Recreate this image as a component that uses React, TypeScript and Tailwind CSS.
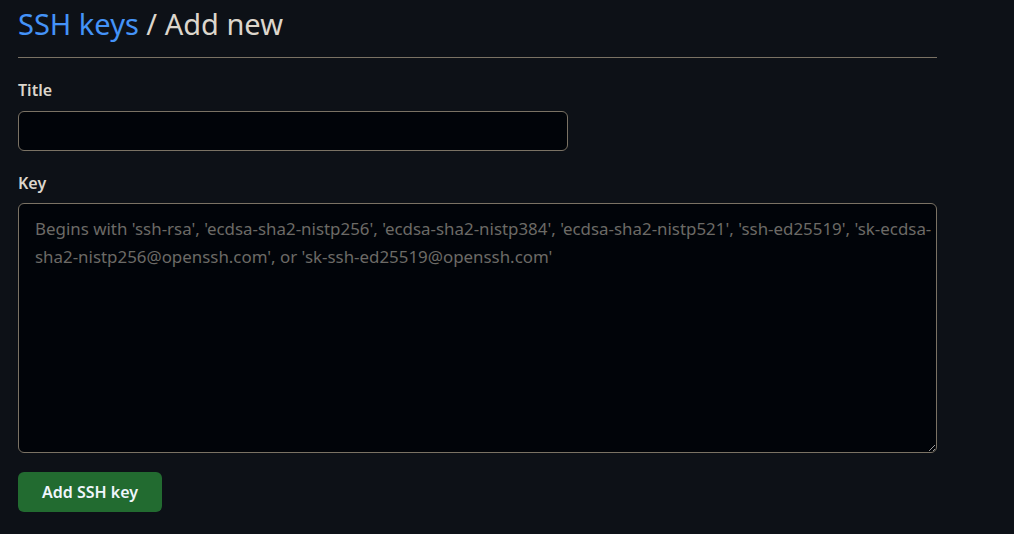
export default function App() {
  return (
    <div
      className="min-h-screen w-full bg-[#0d1117] pl-[18px] [color-scheme:dark]"
      style={{ fontFamily: '"Noto Sans", "Open Sans", sans-serif' }}
    >
      <div className="w-[919px]">
        <div className="border-b border-[#7a7264] pt-[2px] pb-[11px]">
          <h1 className="text-[29px] leading-[44px] font-normal">
            <a className="text-[#4493f8]">SSH keys</a>
            <span className="text-[#dcd6cc]"> / Add new</span>
          </h1>
        </div>
        <form className="pt-[20px]">
          <label className="block text-[16px] font-semibold leading-[24px] text-[#dcd6cc]">
            Title
          </label>
          <input
            type="text"
            className="mt-[9px] block h-[40px] w-[550px] rounded-[6px] border border-[#7a7264] bg-[#010409] px-[16px] text-[17px] text-[#e6edf3] outline-none"
          />
          <label className="mt-[20px] block text-[16px] font-semibold leading-[24px] text-[#dcd6cc]">
            Key
          </label>
          <textarea
            placeholder="Begins with 'ssh-rsa', 'ecdsa-sha2-nistp256', 'ecdsa-sha2-nistp384', 'ecdsa-sha2-nistp521', 'ssh-ed25519', 'sk-ecdsa-sha2-nistp256@openssh.com', or 'sk-ssh-ed25519@openssh.com'"
            className="mt-[8px] block h-[250px] w-[919px] rounded-[6px] border border-[#7a7264] bg-[#010409] pl-[16px] pr-0 py-[11px] text-[16.9px] leading-[28px] text-[#e6edf3] outline-none placeholder:text-[#6c6a66]"
          />
          <button
            type="button"
            className="mt-[19px] h-[40px] w-[144px] rounded-[6px] bg-[#226b30] text-[16px] font-semibold text-[#f0f6fc]"
          >
            Add SSH key
          </button>
        </form>
      </div>
    </div>
  );
}
